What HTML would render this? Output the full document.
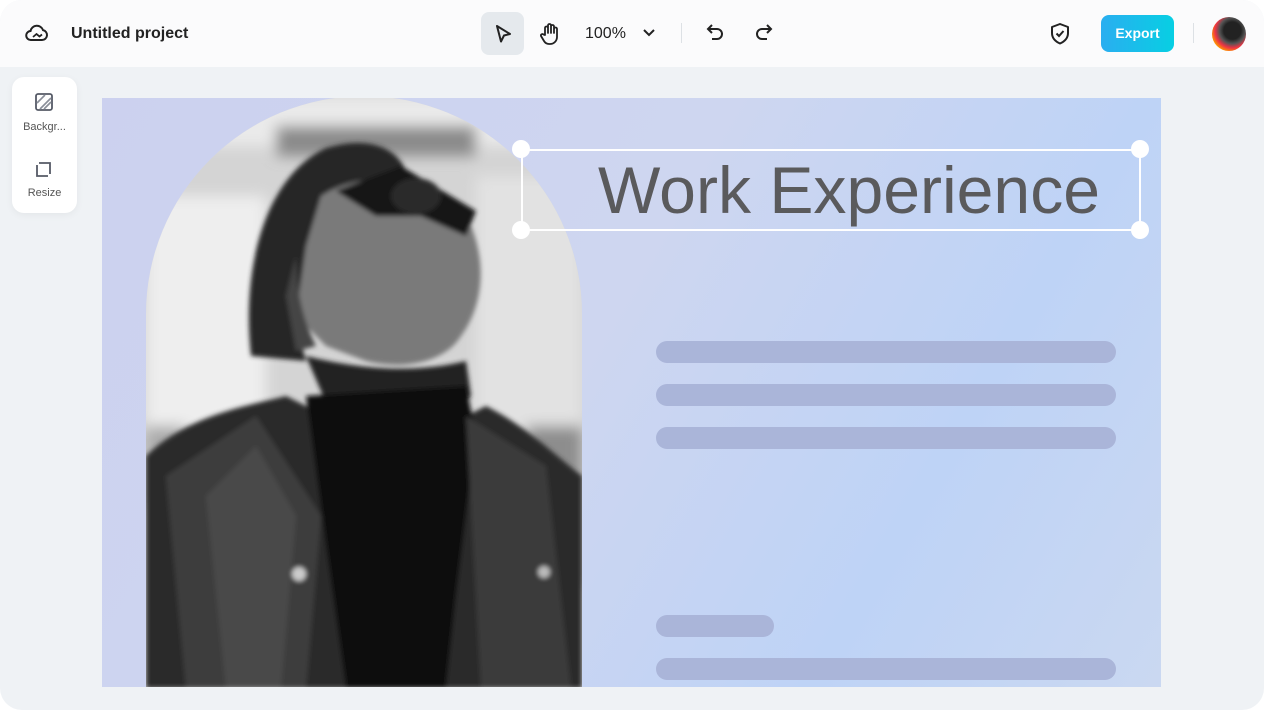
<!DOCTYPE html>
<html><head><meta charset="utf-8"><style>
*{margin:0;padding:0;box-sizing:border-box}
body{width:1264px;height:712px;background:#fff;font-family:"Liberation Sans",sans-serif;position:relative;overflow:hidden}
.frame{position:absolute;left:0;top:0;width:1264px;height:710px;border-radius:22px;background:#eff2f5;overflow:hidden}
.top{position:absolute;left:0;top:0;width:1264px;height:67px;background:#fbfbfc}
.abs{position:absolute}
.bar{position:absolute;left:656px;width:460px;height:22px;border-radius:11px;background:#aab5d9}
</style></head><body>
<div class="frame">
<div class="top">
  <svg class="abs" style="left:25px;top:22px" width="24" height="22" viewBox="0 0 24 22"><path d="M6 18h11a5 5 0 0 0 1-9.9A6.5 6.5 0 0 0 5.5 9 4.5 4.5 0 0 0 6 18z" fill="none" stroke="#222" stroke-width="2"/><path d="M8 15l3.5-3 3 2.5 2.5-2" fill="none" stroke="#222" stroke-width="1.8"/></svg>
  <div class="abs" style="left:71px;top:25px;font-size:16px;font-weight:bold;color:#222">Untitled project</div>
  <div class="abs" style="left:481px;top:12px;width:43px;height:43px;border-radius:8px;background:#e5e9ed"></div>
  <svg class="abs" style="left:493px;top:23px" width="20" height="22" viewBox="0 0 20 22"><path d="M4 3l13 8-6 1.5-3 6z" fill="none" stroke="#222" stroke-width="2" stroke-linejoin="round"/></svg>
  <svg class="abs" style="left:539px;top:22px" width="22" height="24" viewBox="0 0 22 24"><path d="M6 13V6a1.5 1.5 0 0 1 3 0v5V3.5a1.5 1.5 0 0 1 3 0V11V4.5a1.5 1.5 0 0 1 3 0V11V7a1.5 1.5 0 0 1 3 0v8a7 7 0 0 1-7 7h-1a6 6 0 0 1-5-3l-3-5a1.5 1.5 0 0 1 2.5-1.5z" fill="none" stroke="#222" stroke-width="1.8" stroke-linejoin="round"/></svg>
  <div class="abs" style="left:585px;top:25px;font-size:16px;color:#222">100%</div>
  <svg class="abs" style="left:642px;top:28px" width="14" height="10" viewBox="0 0 14 10"><path d="M2 2l5 5 5-5" fill="none" stroke="#222" stroke-width="2"/></svg>
  <div class="abs" style="left:681px;top:23px;width:1px;height:20px;background:#dde1e5"></div>
  <svg class="abs" style="left:705px;top:22px" width="22" height="22" viewBox="0 0 22 22"><path d="M7 3L3 7l4 4M3 7h9a5 5 0 0 1 0 10H7" fill="none" stroke="#222" stroke-width="2"/></svg>
  <svg class="abs" style="left:752px;top:22px" width="22" height="22" viewBox="0 0 22 22"><path d="M15 3l4 4-4 4M19 7h-9a5 5 0 0 0 0 10h5" fill="none" stroke="#222" stroke-width="2"/></svg>
  <svg class="abs" style="left:1049px;top:22px" width="22" height="24" viewBox="0 0 22 24"><path d="M11 2l8 3v6c0 5-3.5 8.5-8 10.5C6.5 19.5 3 16 3 11V5z" fill="none" stroke="#222" stroke-width="2" stroke-linejoin="round"/><path d="M7.5 11.5l2.5 2.5 4.5-5" fill="none" stroke="#222" stroke-width="2"/></svg>
  <div class="abs" style="left:1101px;top:15px;width:73px;height:37px;border-radius:8px;background:linear-gradient(90deg,#2aaef0,#07cfe3);color:#fff;font-weight:bold;font-size:14px;text-align:center;line-height:37px">Export</div>
  <div class="abs" style="left:1193px;top:23px;width:1px;height:20px;background:#dde1e5"></div>
  <div class="abs" style="left:1212px;top:17px;width:34px;height:34px;border-radius:50%;background:radial-gradient(circle at 60% 40%,#222 30%,#555 45%,#e34 60%,#f90 75%,#ddd 90%)"></div>
</div>
<div class="abs" style="left:12px;top:77px;width:65px;height:136px;border-radius:12px;background:#fff;box-shadow:0 2px 8px rgba(0,0,0,.05)"></div>
<svg class="abs" style="left:35px;top:93px" width="18" height="18" viewBox="0 0 18 18"><rect x="1" y="1" width="16" height="16" rx="2" fill="none" stroke="#555a66" stroke-width="1.8"/><path d="M2 10L10 2M5 16L16 5M9 16L16 9" stroke="#8a8f99" stroke-width="1.6"/></svg>
<div class="abs" style="left:12px;top:121px;width:65px;text-align:center;font-size:11px;color:#555">Backgr...</div>
<svg class="abs" style="left:34px;top:160px" width="20" height="20" viewBox="0 0 20 20"><path d="M3 5v11h11M5 3h11v11" fill="none" stroke="#555a66" stroke-width="1.8"/></svg>
<div class="abs" style="left:12px;top:187px;width:65px;text-align:center;font-size:11px;color:#555">Resize</div>

<div class="abs" style="left:102px;top:98px;width:1059px;height:589px;background:linear-gradient(120deg,#ccd1ef 0%,#ced6f0 45%,#bed3f6 75%,#cad8f1 100%);overflow:hidden">
  <svg class="abs" style="left:44px;top:-2px" width="436" height="592" viewBox="0 0 436 592">
    <defs><clipPath id="c"><path d="M0 592V218A218 218 0 0 1 436 218V592z"/></clipPath><filter id="b"><feGaussianBlur stdDeviation="7"/></filter><filter id="b2"><feGaussianBlur stdDeviation="2.5"/></filter></defs>
    <g clip-path="url(#c)">
      <rect width="436" height="592" fill="#d4d4d4"/>
      <g filter="url(#b)">
        <rect x="0" y="0" width="436" height="50" fill="#eaeaea"/>
        <rect x="130" y="30" width="200" height="30" fill="#8a8a8a"/>
        <rect x="0" y="100" width="120" height="250" fill="#eeeeee"/>
        <rect x="330" y="80" width="106" height="270" fill="#e2e2e2"/>
        <rect x="380" y="330" width="56" height="160" fill="#8d8d8d"/>
        <rect x="0" y="330" width="40" height="80" fill="#aaa"/>
      </g>
      <g filter="url(#b2)">
        <path d="M105 260C95 170 120 80 180 52C220 40 250 50 260 75L230 120 180 150 150 230 160 265z" fill="#262626"/>
        <path d="M175 100C220 70 300 80 325 130C345 180 330 220 315 240C300 265 260 275 220 265L180 250 150 220 160 150z" fill="#7a7a7a"/>
        <path d="M150 160C150 200 160 230 170 250L150 255 140 200z" fill="#444"/>
        <path d="M190 95L255 70 330 115 320 140 275 120 230 120z" fill="#151515"/>
        <path d="M245 100a25 18 0 1 0 50 0a25 18 0 1 0-50 0" fill="#2a2a2a"/>
        <path d="M160 260C200 270 260 280 320 265L325 300 300 330 190 330z" fill="#222"/>
        <path d="M0 592V360C40 320 100 310 140 300L200 330 300 330 340 310C380 330 410 360 436 380V592z" fill="#2a2a2a"/>
        <path d="M160 300L320 290 330 340 310 500 300 592H200L180 450z" fill="#0e0e0e"/>
        <path d="M20 380L110 320 175 420 160 592H40z" fill="#3c3c3c"/>
        <path d="M60 400L110 350 150 420 135 592H80z" fill="#4a4a4a"/>
        <path d="M320 320L400 370 425 592H335z" fill="#3a3a3a"/>
        <circle cx="153" cy="478" r="7" fill="#ccc"/>
        <circle cx="398" cy="476" r="6" fill="#bbb"/>
      </g>
    </g>
  </svg>
  <div class="bar" style="top:243px;left:554px"></div>
  <div class="bar" style="top:286px;left:554px"></div>
  <div class="bar" style="top:329px;left:554px"></div>
  <div class="bar" style="top:517px;left:554px;width:118px"></div>
  <div class="bar" style="top:560px;left:554px"></div>
</div>
<div class="abs" style="left:521px;top:149px;width:620px;height:82px;border:2px solid #fff"></div>
<svg class="abs" style="left:521px;top:149px" width="620" height="82"><text x="77" y="64" font-family="Liberation Sans, sans-serif" font-size="66" fill="#5a5a5c" textLength="502" lengthAdjust="spacingAndGlyphs">Work Experience</text></svg>
<div class="abs" style="left:512px;top:140px;width:18px;height:18px;border-radius:50%;background:#fff"></div>
<div class="abs" style="left:1131px;top:140px;width:18px;height:18px;border-radius:50%;background:#fff"></div>
<div class="abs" style="left:512px;top:221px;width:18px;height:18px;border-radius:50%;background:#fff"></div>
<div class="abs" style="left:1131px;top:221px;width:18px;height:18px;border-radius:50%;background:#fff"></div>
</div>
</body></html>
